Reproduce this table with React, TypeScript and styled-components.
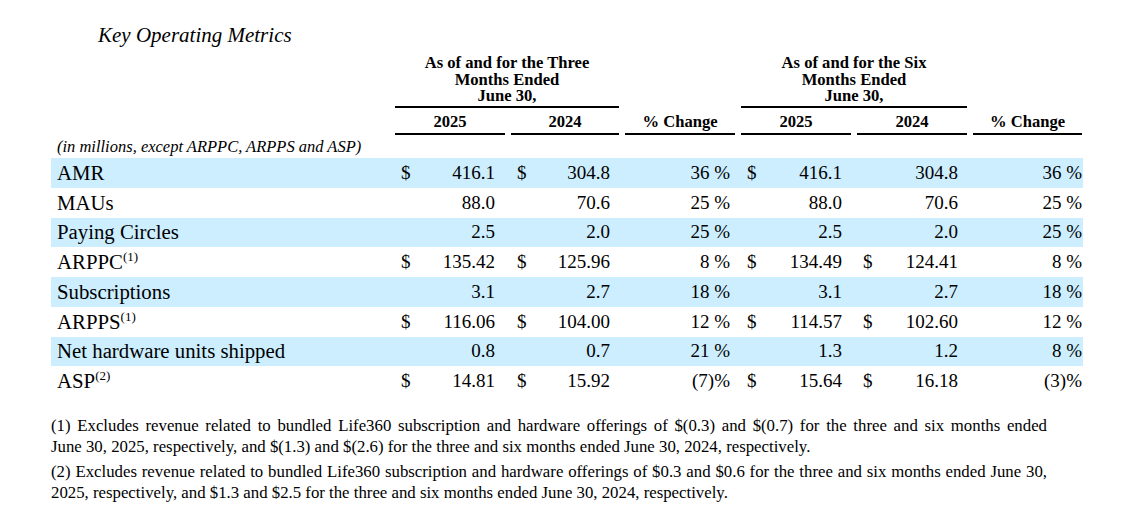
import styled, { createGlobalStyle } from "styled-components";

const GlobalStyle = createGlobalStyle`
  body {
    margin: 0;
    background: #fff;
    color: #000;
    font-family: "Liberation Serif", "Times New Roman", serif;
  }
`;

const COLS = "338px 110px 108px 110px 110px 110px 109px";
// right padding of each value column, as the filing lays them out
const PAD_RIGHT = [10, 9, 5, 9, 9, 0];

const Page = styled.main`
  width: 1032px;
  padding: 24px 0 0 51px;
`;
const Title = styled.h2`
  margin: 0 0 0 47px;
  font: italic 400 21px/22px "Liberation Serif", serif;
`;
const Head = styled.div`
  display: grid;
  grid-template-columns: ${COLS};
  column-gap: 6px;
  margin-top: 9px;
  font: 700 16.6px/16.5px "Liberation Serif", serif;
  text-align: center;
`;
const GroupHead = styled.div<{ $col: number }>`
  grid-column: ${(p) => p.$col} / span 2;
  padding-bottom: 1.5px;
  border-bottom: 2px solid #000;
`;
const YearHead = styled.div`
  grid-row: 2;
  padding: 5.5px 0 3px;
  border-bottom: 2px solid #000;
`;
const Note = styled.div`
  padding-left: 6px;
  font: italic 400 16.5px/23px "Liberation Serif", serif;
`;
const Row = styled.div<{ $shaded: boolean }>`
  display: grid;
  grid-template-columns: ${COLS};
  column-gap: 6px;
  height: 29.75px;
  align-items: center;
  background: ${(p) => (p.$shaded ? "#cceeff" : "transparent")};
  font-size: 19px;
`;
const Label = styled.div`
  padding-left: 6px;
  font-size: 20.8px;
  white-space: nowrap;
`;
const Sup = styled.sup`
  font-size: 13px;
  line-height: 0;
  vertical-align: 8px;
`;
const Cell = styled.div<{ $pr: number }>`
  display: flex;
  justify-content: space-between;
  padding: 0 ${(p) => p.$pr}px 0 6px;
  white-space: nowrap;
`;
const Notes = styled.div`
  width: 996px;
  margin-top: 19px;
`;
const Foot = styled.p`
  margin: 0 0 4px;
  font-size: 16.8px;
  line-height: 21px;
  text-align: justify;
`;

type Val = { d?: boolean; v: string };
type Metric = { label: string; sup?: string; vals: Val[] };

const $ = (v: string): Val => ({ d: true, v });
const n = (v: string): Val => ({ v });

const metrics: Metric[] = [
  { label: "AMR", vals: [$("416.1"), $("304.8"), n("36 %"), $("416.1"), n("304.8"), n("36 %")] },
  { label: "MAUs", vals: [n("88.0"), n("70.6"), n("25 %"), n("88.0"), n("70.6"), n("25 %")] },
  { label: "Paying Circles", vals: [n("2.5"), n("2.0"), n("25 %"), n("2.5"), n("2.0"), n("25 %")] },
  { label: "ARPPC", sup: "(1)", vals: [$("135.42"), $("125.96"), n("8 %"), $("134.49"), $("124.41"), n("8 %")] },
  { label: "Subscriptions", vals: [n("3.1"), n("2.7"), n("18 %"), n("3.1"), n("2.7"), n("18 %")] },
  { label: "ARPPS", sup: "(1)", vals: [$("116.06"), $("104.00"), n("12 %"), $("114.57"), $("102.60"), n("12 %")] },
  { label: "Net hardware units shipped", vals: [n("0.8"), n("0.7"), n("21 %"), n("1.3"), n("1.2"), n("8 %")] },
  { label: "ASP", sup: "(2)", vals: [$("14.81"), $("15.92"), n("(7)%"), $("15.64"), $("16.18"), n("(3)%")] },
];

// dates are kept on one line, as in the filing
const JUNE = "June\u00a030,";

export default function App() {
  return (
    <>
      <GlobalStyle />
      <Page>
        <Title>Key Operating Metrics</Title>
        <Head>
          <GroupHead $col={2}>
            As of and for the Three
            <br />
            Months Ended
            <br />
            June 30,
          </GroupHead>
          <GroupHead $col={5}>
            As of and for the Six
            <br />
            Months Ended
            <br />
            June 30,
          </GroupHead>
          <div style={{ gridRow: 2 }} />
          <YearHead>2025</YearHead>
          <YearHead>2024</YearHead>
          <YearHead>% Change</YearHead>
          <YearHead>2025</YearHead>
          <YearHead>2024</YearHead>
          <YearHead>% Change</YearHead>
        </Head>
        <Note>(in millions, except ARPPC, ARPPS and ASP)</Note>
        {metrics.map((m, i) => (
          <Row key={m.label} $shaded={i % 2 === 0}>
            <Label>
              {m.label}
              {m.sup && <Sup>{m.sup}</Sup>}
            </Label>
            {m.vals.map((c, j) => (
              <Cell key={j} $pr={PAD_RIGHT[j]}>
                <span>{c.d ? "$" : ""}</span>
                <span>{c.v}</span>
              </Cell>
            ))}
          </Row>
        ))}
        <Notes>
          <Foot>
            (1) Excludes revenue related to bundled Life360 subscription and hardware offerings of $(0.3) and
            $(0.7) for the three and six months ended {JUNE} 2025, respectively, and $(1.3) and $(2.6) for the
            three and six months ended {JUNE} 2024, respectively.
          </Foot>
          <Foot>
            (2) Excludes revenue related to bundled Life360 subscription and hardware offerings of $0.3 and $0.6
            for the three and six months ended {JUNE} 2025, respectively, and $1.3 and $2.5 for the three and
            six months ended {JUNE} 2024, respectively.
          </Foot>
        </Notes>
      </Page>
    </>
  );
}
